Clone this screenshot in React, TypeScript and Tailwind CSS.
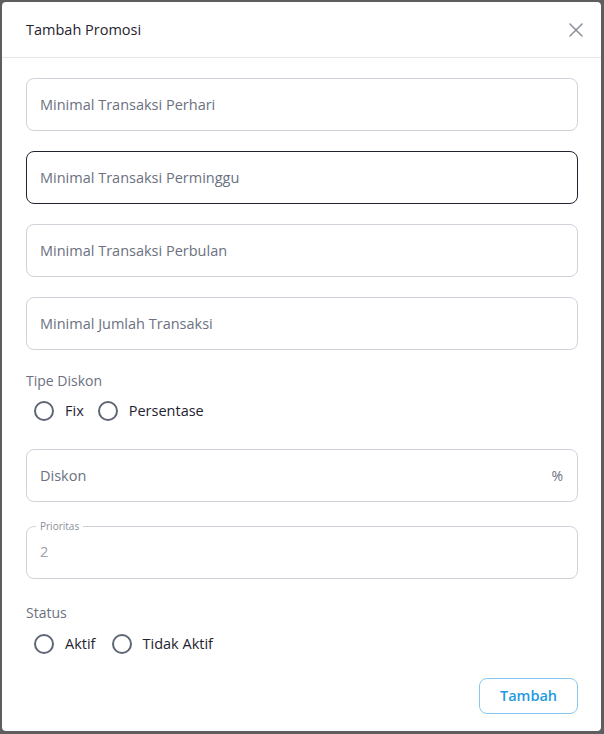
import { X } from "lucide-react";

const font = { fontFamily: '"Open Sans", "Liberation Sans", sans-serif' };

function TextField({
  placeholder,
  focused,
  suffix,
}: {
  placeholder: string;
  focused?: boolean;
  suffix?: string;
}) {
  return (
    <div
      className={`flex h-[53px] items-center justify-between rounded-lg border px-[13px] ${
        focused ? "border-[#1f2430]" : "border-[#cfd2d8]"
      }`}
    >
      <span className="text-[14.5px] text-[#6b7180]">{placeholder}</span>
      {suffix && <span className="pr-[1px] text-[14px] text-[#6b7180]">{suffix}</span>}
    </div>
  );
}

function Radio({ label }: { label: string }) {
  return (
    <label className="flex items-center gap-[11px]">
      <span className="h-[20px] w-[20px] rounded-full border-2 border-[#5f6675]" />
      <span className="text-[14.5px] leading-[20px] text-[#1f2430]">{label}</span>
    </label>
  );
}

export default function App() {
  return (
    <div className="h-[734px] w-[604px] bg-[#5e5e5e] p-[2px] pr-[3px] pb-[3px]" style={font}>
      <div className="flex h-full flex-col rounded-[4px] bg-white">
        <div className="flex h-[56px] items-center justify-between border-b border-[#e3e5e8] pl-[24px] pr-[13px]">
          <h2 className="text-[14.5px] text-[#1f2430]">Tambah Promosi</h2>
          <X className="h-[24px] w-[24px] text-[#8a8f98]" strokeWidth={1.5} />
        </div>

        <div className="flex flex-1 flex-col pl-[24px] pr-[23px] pt-[20px]">
          <div className="flex flex-col gap-[20px]">
            <TextField placeholder="Minimal Transaksi Perhari" />
            <TextField placeholder="Minimal Transaksi Perminggu" focused />
            <TextField placeholder="Minimal Transaksi Perbulan" />
            <TextField placeholder="Minimal Jumlah Transaksi" />
          </div>

          <p className="mt-[21px] text-[14px] leading-[20px] text-[#6b7180]">Tipe Diskon</p>
          <div className="mt-[10px] flex items-center gap-[14px] pl-[8px]">
            <Radio label="Fix" />
            <Radio label="Persentase" />
          </div>

          <div className="mt-[28px]">
            <TextField placeholder="Diskon" suffix="%" />
          </div>

          <fieldset className="mt-[19px] h-[58px] rounded-lg border border-[#cfd2d8] px-[9px]">
            <legend className="px-[4px] text-[10px] leading-[10px] text-[#8a8f98]">Prioritas</legend>
            <div className="pl-[4px] pt-[10px] text-[14.5px] text-[#9ca1aa]">2</div>
          </fieldset>

          <p className="mt-[24px] text-[14px] leading-[20px] text-[#6b7180]">Status</p>
          <div className="mt-[11px] flex items-center gap-[16px] pl-[8px]">
            <Radio label="Aktif" />
            <Radio label="Tidak Aktif" />
          </div>

          <div className="mt-[24px] flex justify-end">
            <button className="h-[36px] w-[99px] rounded-lg border border-[#86c8f0] text-[14.5px] font-semibold text-[#1f9ae0]">
              Tambah
            </button>
          </div>
        </div>
      </div>
    </div>
  );
}
